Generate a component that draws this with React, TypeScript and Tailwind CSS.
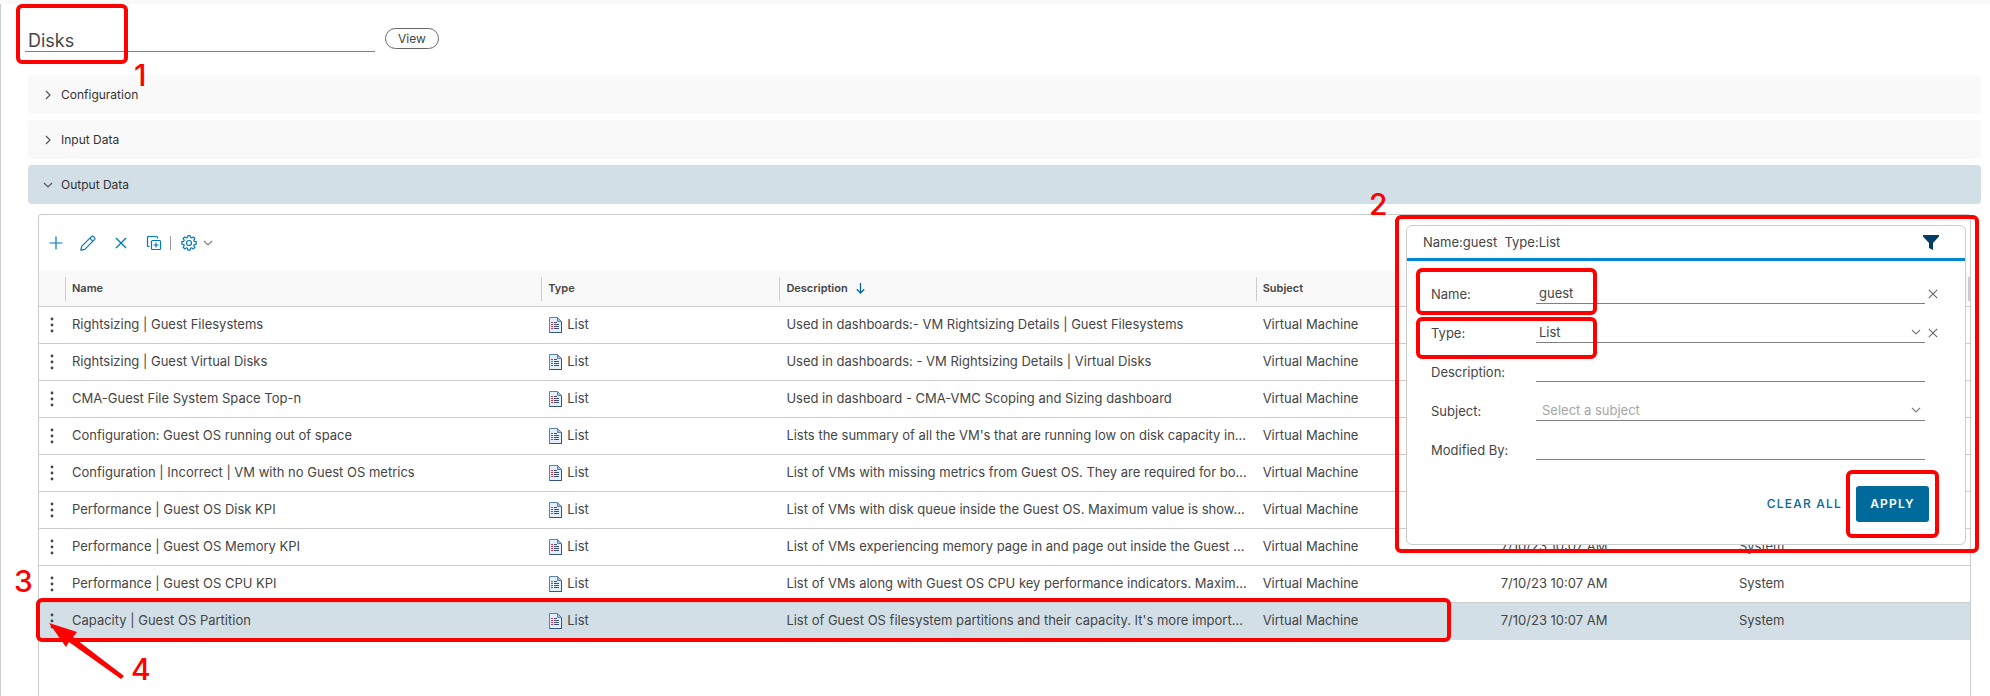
// React Imports
import { FC, ReactNode } from "react";

/**
 * View row props.
 *
 * @property name - The name of the view.
 * @property description - The (shortened) description of the view.
 * @property modified - The date of the last change.
 * @property modifiedBy - The user who made the last change.
 */
interface ViewRow {
  name: string;
  description: string;
  modified?: string;
  modifiedBy?: string;
}

const rows: ViewRow[] = [
  {
    name: "Rightsizing | Guest Filesystems",
    description: "Used in dashboards:- VM Rightsizing Details | Guest Filesystems",
  },
  {
    name: "Rightsizing | Guest Virtual Disks",
    description: "Used in dashboards: - VM Rightsizing Details | Virtual Disks",
  },
  {
    name: "CMA-Guest File System Space Top-n",
    description: "Used in dashboard - CMA-VMC Scoping and Sizing dashboard",
  },
  {
    name: "Configuration: Guest OS running out of space",
    description:
      "Lists the summary of all the VM's that are running low on disk capacity in…",
  },
  {
    name: "Configuration | Incorrect | VM with no Guest OS metrics",
    description:
      "List of VMs with missing metrics from Guest OS. They are required for bo…",
  },
  {
    name: "Performance | Guest OS Disk KPI",
    description:
      "List of VMs with disk queue inside the Guest OS. Maximum value is show…",
  },
  {
    name: "Performance | Guest OS Memory KPI",
    description:
      "List of VMs experiencing memory page in and page out inside the Guest …",
    modified: "7/10/23 10:07 AM",
    modifiedBy: "System",
  },
  {
    name: "Performance | Guest OS CPU KPI",
    description:
      "List of VMs along with Guest OS CPU key performance indicators. Maxim…",
    modified: "7/10/23 10:07 AM",
    modifiedBy: "System",
  },
  {
    name: "Capacity | Guest OS Partition",
    description:
      "List of Guest OS filesystem partitions and their capacity. It's more import…",
    modified: "7/10/23 10:07 AM",
    modifiedBy: "System",
  },
];

const SELECTED = "Capacity | Guest OS Partition";

const gridColumns =
  "grid grid-cols-[26px_minmax(0,2fr)_minmax(0,1fr)_minmax(0,2fr)_minmax(0,1fr)_minmax(0,1fr)_minmax(0,1fr)]";

// Icons
const Chevron: FC<{ className?: string }> = ({ className }) => (
  <svg
    viewBox="0 0 10 10"
    fill="none"
    stroke="currentColor"
    strokeWidth="1.2"
    className={className}
  >
    <path d="M1 3l4 4 4-4" />
  </svg>
);

const Cross: FC<{ className?: string }> = ({ className }) => (
  <svg
    viewBox="0 0 10 10"
    fill="none"
    stroke="currentColor"
    strokeWidth="1.1"
    className={className}
  >
    <path d="M.8.8l8.400 8.400M9.200.8L.8 9.200" />
  </svg>
);

const PlusIcon = () => (
  <svg viewBox="0 0 14 14" stroke="#0079b8" strokeWidth="1.2" className="size-3.5">
    <path d="M7 .5v13M.5 7h13" />
  </svg>
);

const PencilIcon = () => (
  <svg
    viewBox="0 0 16 16"
    fill="none"
    stroke="#0079b8"
    strokeWidth="1.2"
    strokeLinejoin="round"
    className="size-4"
  >
    <path d="M.8 15.2l.9-3.9L11.3 1.7q1-1.1 2-.2l1.2 1.2q1 1-.1 2L4.8 14.3z" />
    <path d="M9.8 3.2l3.1 3.1" />
  </svg>
);

const CloneIcon = () => (
  <svg
    viewBox="0 0 16 16"
    fill="none"
    stroke="#0079b8"
    strokeWidth="1.2"
    className="size-4"
  >
    <path d="M3.500 11.500H2.500q-1 0-1-1V2.500q0-1 1-1h8q1 0 1 1V3.500" />
    <rect x="5.500" y="5.500" width="9" height="9" rx="1" />
    <path d="M10 7.500v5M7.500 10h5" />
  </svg>
);

const GearIcon = () => (
  <svg
    viewBox="0 0 16 16"
    fill="none"
    stroke="#0079b8"
    strokeWidth="1.2"
    strokeLinejoin="round"
    className="size-4"
  >
    <path d="M6.9.6h2.200l.4 1.900 1.100.5 1.700-1.100 1.600 1.600-1.100 1.700.5 1.100 1.900.4v2.400l-1.900.4-.5 1.100 1.100 1.700-1.600 1.600-1.700-1.100-1.100.5-.4 1.900H6.900l-.4-1.900-1.100-.5-1.700 1.100-1.600-1.600 1.100-1.700-.5-1.100-1.900-.4V6.700l1.900-.4.500-1.100-1.100-1.700 1.600-1.600 1.700 1.100 1.100-.5z" />
    <circle cx="8" cy="8" r="2.500" />
  </svg>
);

const ListIcon = () => (
  <svg viewBox="0 0 13 16" className="h-4 w-[13px] shrink-0">
    <path d="M.5.5h8l4 4v11H.5z" fill="#e3effb" stroke="#5b82b0" />
    <path d="M12.500 4.500v11H.5" fill="none" stroke="#34557f" />
    <path d="M8.500.5v4h4z" fill="#a9c1dc" stroke="#5b82b0" />
    <path d="M5 5.500h3M5 7.500h5M5 9.500h5M5 11.500h5" stroke="#3a4d78" />
    <path d="M2 5.500h2M2 7.500h2M2 9.500h2M2 11.500h2" stroke="#d8323c" />
  </svg>
);

const DotsIcon = () => (
  <svg viewBox="0 0 4 16" fill="#454545" className="h-4 w-1">
    <circle cx="2" cy="2" r="1.400" />
    <circle cx="2" cy="8" r="1.400" />
    <circle cx="2" cy="14" r="1.400" />
  </svg>
);

const FilterIcon = () => (
  <svg viewBox="0 0 16 15" fill="#003d63" className="h-[15px] w-4">
    <path d="M0 0h16v1.500L10 8v7l-4-2V8L0 1.500z" />
  </svg>
);

/**
 * @description Red outline with an optional step number, drawn over the part it marks.
 */
const Mark: FC<{ className: string; children?: ReactNode }> = ({
  className,
  children,
}) => (
  <div
    className={`pointer-events-none absolute z-20 rounded-md border-4 border-[#ff0000] text-3xl leading-none font-medium text-[#ff0000] ${className}`}
  >
    {children}
  </div>
);

const Section: FC<{ title: string; open?: boolean }> = ({ title, open }) => (
  <button
    type="button"
    aria-expanded={!!open}
    className={`flex h-[39px] w-full items-center gap-2 rounded px-[15px] text-left text-xs text-[#333333] ${
      open ? "bg-[#d3dfe6]" : "bg-[#f9f9f9]"
    }`}
  >
    <Chevron
      className={`size-2.5 text-[#565656] ${open ? "" : "-rotate-90"}`}
    />
    {title}
  </button>
);

const HeaderCell: FC<{ children?: ReactNode }> = ({ children }) => (
  <th className="flex h-6 items-center gap-2 border-l border-[#cccccc] pl-1.5 text-left text-[11px] font-semibold">
    {children}
  </th>
);

/**
 * Filter field props.
 *
 * @property id - The id which ties the label to its control.
 * @property label - The label text.
 * @property clearable - Whether a clear button follows the control.
 */
interface FilterFieldProps {
  id: string;
  label: string;
  clearable?: boolean;
  children: ReactNode;
}

const FilterField: FC<FilterFieldProps> = ({ id, label, clearable, children }) => (
  <div className="flex h-[39px] items-end">
    <label htmlFor={id} className="w-[105px] leading-5">
      {label}
    </label>
    <div className="relative flex-1">{children}</div>
    <div className="flex h-5 w-10 items-center pl-[3px]">
      {clearable && (
        <button type="button" aria-label={`Clear ${label}`}>
          <Cross className="size-2.5 text-[#666666]" />
        </button>
      )}
    </div>
  </div>
);

const control =
  "block h-5 w-full appearance-none border-b border-[#808080] bg-transparent pb-0.5 outline-none";

const FilterPanel = () => (
  <div className="absolute top-2.5 right-1 z-10 w-[560px] rounded-md border border-[#cccccc] bg-white">
    {/* Summary */}
    <div className="flex h-[35px] items-center justify-between border-b-[3px] border-[#0088cc] pt-px pr-[26px] pl-4">
      <span className="whitespace-pre">Name:guest{"  "}Type:List</span>
      <button type="button" aria-label="Filter">
        <FilterIcon />
      </button>
    </div>

    {/* Fields */}
    <form className="relative pt-1 pb-[22px] pl-6">
      <Mark className="top-[7px] left-[9px] h-[47px] w-[181px]" />
      <Mark className="top-14 left-[9px] h-[42px] w-[181px]" />
      <FilterField id="name" label="Name:" clearable>
        <input
          id="name"
          type="text"
          defaultValue="guest"
          className={`${control} pl-[3px]`}
        />
      </FilterField>
      <FilterField id="type" label="Type:" clearable>
        <select id="type" defaultValue="List" className={`${control} pl-[3px]`}>
          <option>List</option>
        </select>
        <Chevron className="pointer-events-none absolute top-1 right-1 size-2.5 text-[#808080]" />
      </FilterField>
      <FilterField id="description" label="Description:">
        <input
          id="description"
          type="text"
          className={`${control} pl-[3px]`}
        />
      </FilterField>
      <FilterField id="subject" label="Subject:">
        <select
          id="subject"
          defaultValue=""
          className={`${control} pl-1.5 text-[#a6a6a6]`}
        >
          <option value="">Select a subject</option>
        </select>
        <Chevron className="pointer-events-none absolute top-1 right-1 size-2.5 text-[#808080]" />
      </FilterField>
      <FilterField id="modified-by" label="Modified By:">
        <input
          id="modified-by"
          type="text"
          className={`${control} pl-[3px]`}
        />
      </FilterField>

      {/* Actions */}
      <div className="mt-[26px] flex items-center justify-end gap-3.5 pr-9 text-xs font-medium">
        <button type="button" className="tracking-widest text-[#006a9b]">
          CLEAR ALL
        </button>
        <div className="relative">
          <button
            type="button"
            className="h-9 w-[73px] rounded-[3px] bg-[#006a9b] font-semibold tracking-widest text-white"
          >
            APPLY
          </button>
          <Mark className="-inset-x-2.5 -inset-y-4" />
        </div>
      </div>
    </form>

    <Mark className="-top-[11px] -right-3.5 -bottom-[9px] -left-3">
      <span className="absolute -top-[30px] -left-[30px]">2</span>
    </Mark>
  </div>
);

const ViewsTable = () => (
  <table className="block w-full">
    <thead className="block border-b border-[#cccccc] bg-[#f9f9f9]">
      <tr className={`h-[35px] items-center ${gridColumns}`}>
        <th aria-label="Actions" />
        <HeaderCell>Name</HeaderCell>
        <HeaderCell>Type</HeaderCell>
        <HeaderCell>
          Description
          <svg
            viewBox="0 0 9 11"
            fill="none"
            stroke="#006a9b"
            strokeWidth="1.3"
            className="h-[11px] w-[9px]"
          >
            <path d="M4.500 0v10M.8 6.300l3.700 3.700 3.700-3.700" />
          </svg>
        </HeaderCell>
        <HeaderCell>Subject</HeaderCell>
        <HeaderCell />
        <th className="h-6 border-r-2 border-l border-[#cccccc]" />
      </tr>
    </thead>
    <tbody className="block">
      {rows.map(({ name, description, modified, modifiedBy }) => (
        <tr
          key={name}
          className={`h-[37px] items-center border-b whitespace-nowrap ${gridColumns} ${
            name === SELECTED
              ? "border-[#d3dfe6] bg-[#d3dfe6]"
              : "border-[#cccccc]"
          }`}
        >
          <td className="relative flex h-full items-center justify-center">
            <button type="button" aria-label={`Actions for ${name}`}>
              <DotsIcon />
            </button>
            {name === SELECTED && (
              <Mark className="-top-[5px] -left-[3px] h-11 w-[1415px]">
                <span className="absolute -top-9 -left-[26px]">3</span>
                <svg
                  viewBox="0 0 90 80"
                  fill="#ff0000"
                  className="absolute top-0 left-0 h-20 w-[90px]"
                >
                  <path d="M9 21l28 9-4 5 51 39-3 3-52-37-3 5z" />
                </svg>
                <span className="absolute top-[52px] left-[91px]">4</span>
              </Mark>
            )}
          </td>
          <td className="truncate pl-[7px]">{name}</td>
          <td className="flex items-center gap-[5px] pl-2">
            <ListIcon />
            List
          </td>
          <td className="pl-[7px]">{description}</td>
          <td className="pl-[7px]">Virtual Machine</td>
          <td className="pl-[7px]">{modified}</td>
          <td className="pl-[7px]">{modifiedBy}</td>
        </tr>
      ))}
    </tbody>
  </table>
);

export default function App() {
  return (
    <div className="flex min-h-screen flex-col bg-white font-['Inter',sans-serif] text-[13px] text-[#454545]">
      <div className="h-1 bg-[#f9f9f9]" />

      <main className="relative flex flex-1 flex-col border-l border-[#cccccc] pr-[9px] pl-[27px]">
        {/* Title */}
        <div className="-ml-[3px] flex items-start gap-2.5 pt-6">
          <input
            type="text"
            aria-label="View name"
            defaultValue="Disks"
            className="h-6 w-[350px] border-b border-[#808080] pt-0.5 pl-[3px] text-lg outline-none"
          />
          <button
            type="button"
            className="h-[21px] w-[54px] rounded-full border border-[#666666] text-xs"
          >
            View
          </button>
        </div>
        <Mark className="top-0 left-[15px] h-[60px] w-28">
          <span className="absolute top-[52px] left-[114px]">1</span>
        </Mark>

        {/* Sections */}
        <div className="mt-[23px] flex flex-col gap-1.5">
          <Section title="Configuration" />
          <Section title="Input Data" />
          <Section title="Output Data" open />
        </div>

        {/* Views grid */}
        <div className="relative mt-2.5 mr-2.5 ml-2.5 flex-1 rounded-t border border-b-0 border-[#cccccc]">
          <div className="flex h-14 items-center pl-2.5">
            <div className="flex items-center gap-[17px]">
              <button type="button" aria-label="Add">
                <PlusIcon />
              </button>
              <button type="button" aria-label="Edit">
                <PencilIcon />
              </button>
              <button type="button" aria-label="Delete" className="px-0.5">
                <Cross className="size-3 text-[#0079b8]" />
              </button>
              <button type="button" aria-label="Clone">
                <CloneIcon />
              </button>
            </div>
            <div className="mr-2.5 ml-2 h-3.5 w-px bg-[#999999]" />
            <button
              type="button"
              aria-label="More actions"
              className="flex items-center gap-1.5"
            >
              <GearIcon />
              <Chevron className="size-2.5 text-[#808080]" />
            </button>
          </div>

          <ViewsTable />
          <FilterPanel />
        </div>
      </main>
    </div>
  );
}
